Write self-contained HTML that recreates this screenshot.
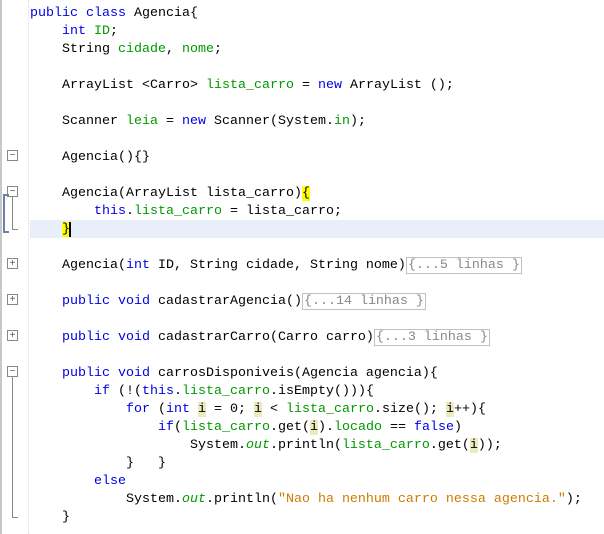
<!DOCTYPE html><html><head><style>
body{margin:0;width:604px;height:534px;background:#fff;position:relative;overflow:hidden;font-family:"Liberation Mono",monospace;font-size:13.33px}
.g{position:absolute;left:0;top:0;width:28px;height:534px;background:#fff;border-left:2px solid #c8c8c8;box-sizing:border-box}
.sep{position:absolute;left:28px;top:0;height:534px;border-left:1px dotted #ddd}
.l{position:absolute;left:30px;height:18px;line-height:18px;white-space:pre;color:#000;margin-top:2px}
.k{color:#0000e6}.f{color:#009900}.s{color:#ce7b00}.o{color:#009900;font-style:italic}
.y{background:#ffff00}.i{background:#ecebc0}
.c{color:#888;border:1px solid #c0c0c0;padding:0 1px}
.hl{position:absolute;left:30px;top:220px;width:574px;height:18px;background:#e9eff8}
.fb{position:absolute;left:7px;width:11px;height:11px;border:1px solid #888;box-sizing:border-box;background:#fff;font:10px/9px "Liberation Sans",sans-serif;text-align:center;color:#555}
.vl{position:absolute;left:12px;border-left:1px solid #888}
</style></head><body>
<div class="g"></div><div class="sep"></div>
<div class="hl"></div>
<div class="fb" style="top:150px">−</div>
<div class="fb" style="top:186px">−</div>
<div class="vl" style="top:197px;height:32px"></div><div style="position:absolute;left:12px;top:229px;width:6px;border-top:1px solid #888"></div>
<div style="position:absolute;left:3px;top:194px;width:4px;height:35px;border:2px solid #6a84a8;border-right:none"></div>
<div class="fb" style="top:258px">+</div>
<div class="fb" style="top:294px">+</div>
<div class="fb" style="top:330px">+</div>
<div class="fb" style="top:366px">−</div>
<div class="vl" style="top:377px;height:140px"></div><div style="position:absolute;left:12px;top:517px;width:6px;border-top:1px solid #888"></div>
<div class="l" style="top:3px"><span class="k">public class</span> Agencia{</div>
<div class="l" style="top:21px">    <span class="k">int</span> <span class="f">ID</span>;</div>
<div class="l" style="top:39px">    String <span class="f">cidade</span>, <span class="f">nome</span>;</div>
<div class="l" style="top:75px">    ArrayList &lt;Carro&gt; <span class="f">lista_carro</span> = <span class="k">new</span> ArrayList ();</div>
<div class="l" style="top:111px">    Scanner <span class="f">leia</span> = <span class="k">new</span> Scanner(System.<span class="f">in</span>);</div>
<div class="l" style="top:147px">    Agencia(){}</div>
<div class="l" style="top:183px">    Agencia(ArrayList lista_carro)<span class="y">{</span></div>
<div class="l" style="top:201px">        <span class="k">this</span>.<span class="f">lista_carro</span> = lista_carro;</div>
<div class="l" style="top:219px">    <span class="y">}</span><span style="border-left:2px solid #000;margin-left:-1px"></span></div>
<div class="l" style="top:255px">    Agencia(<span class="k">int</span> ID, String cidade, String nome)<span class="c">{...5 linhas }</span></div>
<div class="l" style="top:291px">    <span class="k">public void</span> cadastrarAgencia()<span class="c">{...14 linhas }</span></div>
<div class="l" style="top:327px">    <span class="k">public void</span> cadastrarCarro(Carro carro)<span class="c">{...3 linhas }</span></div>
<div class="l" style="top:363px">    <span class="k">public void</span> carrosDisponiveis(Agencia agencia){</div>
<div class="l" style="top:381px">        <span class="k">if</span> (!(<span class="k">this</span>.<span class="f">lista_carro</span>.isEmpty())){</div>
<div class="l" style="top:399px">            <span class="k">for</span> (<span class="k">int</span> <span class="i">i</span> = 0; <span class="i">i</span> &lt; <span class="f">lista_carro</span>.size(); <span class="i">i</span>++){</div>
<div class="l" style="top:417px">                <span class="k">if</span>(<span class="f">lista_carro</span>.get(<span class="i">i</span>).<span class="f">locado</span> == <span class="k">false</span>)</div>
<div class="l" style="top:435px">                    System.<span class="o">out</span>.println(<span class="f">lista_carro</span>.get(<span class="i">i</span>));</div>
<div class="l" style="top:453px">            }   }</div>
<div class="l" style="top:471px">        <span class="k">else</span></div>
<div class="l" style="top:489px">            System.<span class="o">out</span>.println(<span class="s">"Nao ha nenhum carro nessa agencia."</span>);</div>
<div class="l" style="top:507px">    }</div>
</body></html>
